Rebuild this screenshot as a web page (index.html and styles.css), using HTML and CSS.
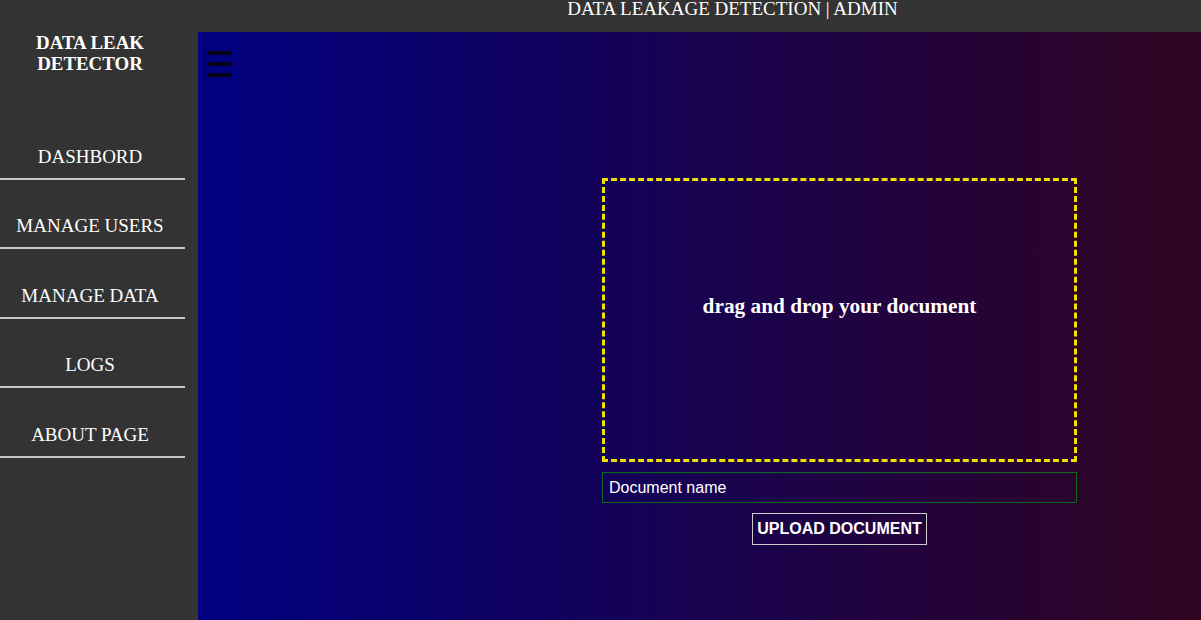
FILE: index.html
```html
<!DOCTYPE html>
<html lang="en">
<head>
<meta charset="utf-8">
<title>Data Leak Detector</title>
<link rel="stylesheet" href="styles.css">
</head>
<body>
<aside class="sidebar">
  <div class="brand">DATA LEAK<br>DETECTOR</div>
  <nav class="nav">
    <a class="nav-item" href="#">DASHBORD</a>
    <a class="nav-item" href="#">MANAGE USERS</a>
    <a class="nav-item" href="#">MANAGE DATA</a>
    <a class="nav-item" href="#">LOGS</a>
    <a class="nav-item" href="#">ABOUT PAGE</a>
  </nav>
</aside>
<div class="right">
  <header class="topbar">DATA LEAKAGE DETECTION | ADMIN</header>
  <main class="main">
    <div class="menu-toggle"><span></span><span></span><span></span></div>
    <form class="upload">
      <div class="dropzone"><span class="drop-text">drag and drop your document</span></div>
      <input class="doc-name" type="text" placeholder="Document name">
      <button class="upload-btn" type="button">UPLOAD DOCUMENT</button>
    </form>
  </main>
</div>
</body>
</html>
```

FILE: styles.css
```css
* { box-sizing: border-box; }
html, body { height: 100%; }
body {
  margin: 0;
  display: flex;
  background: #333333;
  font-family: "Liberation Serif", "Times New Roman", serif;
  color: #ffffff;
  overflow: hidden;
}
.sidebar {
  width: 198px;
  flex: none;
  background: #333333;
  padding-top: 32px;
}
.brand {
  width: 180px;
  text-align: center;
  font-weight: bold;
  font-size: 18.9px;
  line-height: 21px;
}
.nav {
  margin-top: 36px;
  width: 185px;
  display: flex;
  flex-direction: column;
}
.nav-item {
  display: block;
  color: #ffffff;
  text-decoration: none;
  font-size: 19px;
  line-height: 21.5px;
  text-align: center;
  padding: 35.5px 5px 10.5px 0;
  border-bottom: 2px solid #c8c8c8;
}
.right {
  flex: 1;
  display: flex;
  flex-direction: column;
  min-width: 0;
}
.topbar {
  height: 32px;
  flex: none;
  background: #333333;
  font-size: 19px;
  line-height: 18px;
  text-align: center;
  padding-left: 66px;
}
.main {
  flex: 1;
  background: linear-gradient(to right, #000080, #300420);
  display: flex;
  flex-direction: column;
}
.menu-toggle {
  margin: 19px 0 0 9px;
  width: 24px;
  display: flex;
  flex-direction: column;
  gap: 7px;
}
.menu-toggle span {
  display: block;
  height: 4px;
  background: #05021a;
}
.upload {
  margin: 101px 0 0 404px;
  width: 475px;
  display: flex;
  flex-direction: column;
  align-items: center;
}
.dropzone {
  width: 475px;
  height: 284px;
  border: 3px dashed #f2e000;
  padding-top: 113px;
  text-align: center;
}
.drop-text {
  font-weight: bold;
  font-size: 21.3px;
}
.doc-name {
  margin-top: 10px;
  width: 475px;
  height: 31px;
  border: 1px solid #0b6a1c;
  background: transparent;
  color: #ffffff;
  font-family: "Liberation Sans", Arial, sans-serif;
  font-size: 16px;
  padding: 0 6px;
  outline: none;
}
.doc-name::placeholder { color: #ffffff; opacity: 1; }
.upload-btn {
  margin-top: 10px;
  height: 32px;
  width: 175px;
  padding: 0;
  border: 1px solid #cccccc;
  background: transparent;
  color: #ffffff;
  font-family: "Liberation Sans", Arial, sans-serif;
  font-weight: bold;
  font-size: 16px;
}
```
